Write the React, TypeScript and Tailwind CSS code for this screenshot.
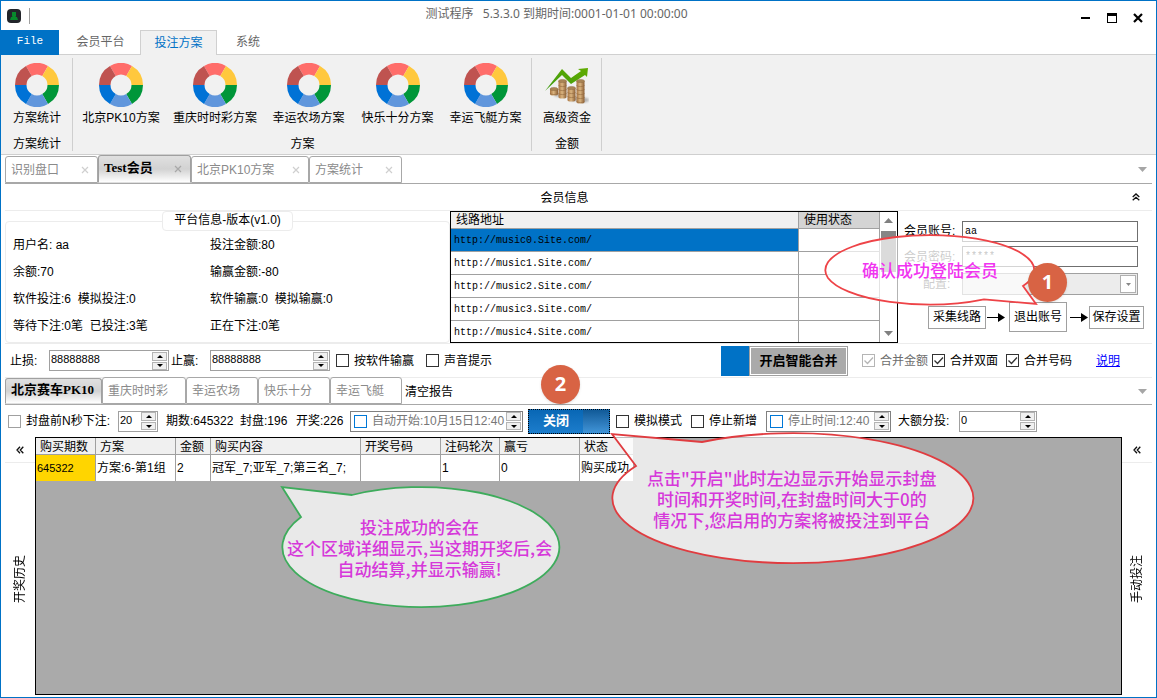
import React, { useId } from 'react';

const SANS = "font-['Liberation_Sans','Noto_Sans_CJK_SC',sans-serif]";
const CJK = "font-['Noto_Sans_CJK_SC',sans-serif]";
const SERIF_BOLD = "font-['Liberation_Serif','Noto_Sans_CJK_SC',serif] text-[13px] font-bold";

const ringColors = ['#ff6d6a', '#ffc83d', '#009639', '#6096dc', '#0072d6', '#bf5350'];

function Ring() {
  const point = (r: number, deg: number) => {
    const a = (deg * Math.PI) / 180;
    return `${(22 + r * Math.cos(a)).toFixed(2)} ${(22 + r * Math.sin(a)).toFixed(2)}`;
  };
  return (
    <svg width="44" height="44" viewBox="0 0 44 44" aria-hidden="true">
      {ringColors.map((c, i) => {
        const s = -120 + i * 60;
        return (
          <path
            key={c}
            fill={c}
            d={`M${point(22, s)} A22 22 0 0 1 ${point(22, s + 60)} L${point(10.5, s + 60)} A10.5 10.5 0 0 0 ${point(10.5, s)} Z`}
          />
        );
      })}
    </svg>
  );
}

function Stack({ x, y, h }: { x: number; y: number; h: number }) {
  const rings: number[] = [];
  for (let i = 4; i < h; i += 4) rings.push(i);
  return (
    <g>
      <path d={`M${x} ${y} V${y + h} a4 1.6 0 0 0 8 0 V${y} Z`} fill="url(#coin)" />
      {rings.map((r) => (
        <path key={r} d={`M${x} ${y + r} a4 1.6 0 0 0 8 0`} fill="none" stroke="#936a3f" strokeWidth="0.6" />
      ))}
      <ellipse cx={x + 4} cy={y} rx="4" ry="1.6" fill="#a98455" stroke="#8d6a43" strokeWidth="0.5" />
    </g>
  );
}

function Money() {
  return (
    <svg width="44" height="44" viewBox="0 0 44 44" aria-hidden="true">
      <defs>
        <linearGradient id="coin">
          <stop offset="0" stopColor="#a87440" />
          <stop offset="0.45" stopColor="#dab480" />
          <stop offset="1" stopColor="#8c5f35" />
        </linearGradient>
        <linearGradient id="rise" x1="0" y1="1" x2="1" y2="0">
          <stop offset="0" stopColor="#3c9a12" />
          <stop offset="1" stopColor="#62ac00" />
        </linearGradient>
        <filter id="soft"><feGaussianBlur stdDeviation="1" /></filter>
      </defs>
      <g fill="#b0b0b0" filter="url(#soft)">
        <ellipse cx="38" cy="37" rx="6" ry="2.500" />
        <ellipse cx="29" cy="36" rx="5" ry="2" />
        <ellipse cx="14" cy="32" rx="5" ry="1.500" />
      </g>
      <Stack x={5} y={26} h={5} />
      <Stack x={13.5} y={18} h={16} />
      <Stack x={22.5} y={25} h={12} />
      <Stack x={31.5} y={18} h={21} />
      <path d="M0 28 L17 6 L26 15 L36 8 L33 6 L43 5 L42 14 L40 12 L26 21 L17 12 Z" fill="url(#rise)" />
    </svg>
  );
}

function RibbonButton({ label, width, icon }: { label: string; width: string; icon?: React.ReactNode }) {
  return (
    <button type="button" className={`flex flex-col items-center gap-px pt-2 ${width}`}>
      {icon ?? <Ring />}
      <span className="whitespace-nowrap leading-5">{label}</span>
    </button>
  );
}

function RibbonGroup({ title, width, children }: { title: string; width: string; children: React.ReactNode }) {
  return (
    <div className={`relative flex flex-col justify-between after:absolute after:inset-y-[3px] after:right-0 after:w-px after:bg-[#cfcfcf] ${width}`}>
      <div className="flex justify-center">{children}</div>
      <div className="text-center leading-5">{title}</div>
    </div>
  );
}

function DocTab({ label, width, active, closable }: { label: string; width: string; active?: boolean; closable?: boolean }) {
  return (
    <button
      type="button"
      className={`flex shrink-0 items-center justify-between whitespace-nowrap rounded-t-[3px] border pl-[5px] pr-2 ${width} ${
        active
          ? `h-full border-[#a0a0a0] border-b-transparent bg-gradient-to-b from-[#e0e0e0] via-[#d2d2d2] to-white text-black ${SERIF_BOLD}`
          : 'h-[27px] border-[#a8a8a8] bg-white text-[#8a8a8a]'
      }`}
    >
      <span className={active ? '-mt-0.5' : ''}>{label}</span>
      {closable && (
        <svg width="8" height="8" viewBox="0 0 8 8" className={active ? 'text-[#a8a8a8]' : 'text-[#cfcfcf]'} aria-hidden="true">
          <path d="M1 1 L7 7 M7 1 L1 7" stroke="currentColor" strokeWidth="1.2" />
        </svg>
      )}
    </button>
  );
}

function DropArrow() {
  return (
    <button type="button" aria-label="标签列表" className="mr-[5px] self-center">
      <svg width="9" height="5" viewBox="0 0 9 5" aria-hidden="true">
        <path d="M0 0 H9 L4.500 5 Z" fill="#a6a6a6" />
      </svg>
    </button>
  );
}

function SpinButtons() {
  return (
    <span className="mr-px flex w-[15px] shrink-0 flex-col gap-px">
      <button type="button" aria-label="增加" className="flex h-[9px] items-center justify-center border border-[#b4b4b4] bg-[#f0f0f0]">
        <svg width="6" height="3" viewBox="0 0 6 3" aria-hidden="true"><path d="M3 0 L6 3 H0 Z" /></svg>
      </button>
      <button type="button" aria-label="减少" className="flex h-2 items-center justify-center border border-[#b4b4b4] bg-[#f0f0f0]">
        <svg width="6" height="3" viewBox="0 0 6 3" aria-hidden="true"><path d="M3 3 L6 0 H0 Z" /></svg>
      </button>
    </span>
  );
}

function Spin({ label, labelWidth, width, value }: { label: string; labelWidth: string; width: string; value: string }) {
  const id = useId();
  return (
    <div className="flex shrink-0 items-center">
      <label htmlFor={id} className={labelWidth}>{label}</label>
      <span className={`flex h-[21px] items-center border border-[#a0a0a0] bg-white ${width}`}>
        <input id={id} defaultValue={value} className="h-4 w-full min-w-0 self-start px-px text-[11px] leading-4 outline-none" />
        <SpinButtons />
      </span>
    </div>
  );
}

function Check({ label, name, checked, disabled, tone = 'border-[#333]', width = '' }: {
  label: string; name?: string; checked?: boolean; disabled?: boolean; tone?: string; width?: string;
}) {
  return (
    <label className={`flex shrink-0 items-center ${disabled ? 'text-[#6d6d6d]' : ''} ${width}`}>
      <span className="relative flex">
        <input type="checkbox" aria-label={name} defaultChecked={checked} disabled={disabled} className={`h-[13px] w-[13px] appearance-none border bg-white ${tone}`} />
        {checked && (
          <svg width="13" height="13" viewBox="0 0 13 13" className="pointer-events-none absolute inset-0" aria-hidden="true">
            <path d="M2.500 6.500 L5.500 9.500 L11 3.500" fill="none" stroke={disabled ? '#b5b5b5' : '#333'} strokeWidth="1.3" />
          </svg>
        )}
      </span>
      <span className="pl-[5px]">{label}</span>
    </label>
  );
}

function Chevrons({ up }: { up?: boolean }) {
  return (
    <svg width="8" height="8" viewBox="0 0 8 8" className={up ? 'rotate-90' : ''} aria-hidden="true">
      <path d="M4 0.700 L1 4 L4 7.300 M7.300 0.700 L4.300 4 L7.300 7.300" fill="none" stroke="#111" strokeWidth="1.3" />
    </svg>
  );
}

function SidePanel({ title }: { title: string }) {
  return (
    <div className="flex w-[30px] shrink-0 flex-col items-center bg-white">
      <button type="button" aria-label={`展开${title}`} className="flex h-[26px] w-full items-center justify-center border-b border-[#ececec]">
        <Chevrons />
      </button>
      <div className="flex flex-1 items-center justify-center">
        <span className="rotate-180 leading-5 [text-orientation:sideways] [writing-mode:vertical-rl]">{title}</span>
      </div>
    </div>
  );
}

function FlowArrow() {
  return (
    <svg width="20" height="10" viewBox="0 0 20 10" className="shrink-0" aria-hidden="true">
      <path d="M1 5.500 H14" stroke="#000" />
      <path d="M12 1 L19 5.500 L12 10 Z" />
    </svg>
  );
}

function Badge({ n, place }: { n: number; place: string }) {
  return (
    <div className={`absolute flex h-[39px] w-[39px] items-center justify-center rounded-full bg-[#d86344] font-['Open_Sans',sans-serif] text-[20px] font-bold text-white shadow-sm ${place}`}>
      {n}
    </div>
  );
}

const routes = [0, 1, 2, 3, 4].map((n) => `http://music${n}.Site.com/`);

const columns = [
  { title: '购买期数', value: '645322', width: 'w-[60px]' },
  { title: '方案', value: '方案:6-第1组', width: 'w-[80px]' },
  { title: '金额', value: '2', width: 'w-[35px]' },
  { title: '购买内容', value: '冠军_7;亚军_7;第三名_7;', width: 'w-[150px]' },
  { title: '开奖号码', value: '', width: 'w-[80px]' },
  { title: '注码轮次', value: '1', width: 'w-[59px]' },
  { title: '赢亏', value: '0', width: 'w-[80px]' },
  { title: '状态', value: '购买成功', width: 'w-[53px]' },
];

function TitleBar() {
  return (
    <div className="grid h-[29px] grid-cols-[1fr_auto_1fr] items-center">
      <div className="flex items-center gap-2 pl-1.5">
        <svg width="14" height="14" viewBox="0 0 14 14" aria-hidden="true">
          <rect width="14" height="14" rx="4" fill="#22252a" />
          <path d="M5 3 H9 V7 L8.500 8 H10 L11 11 H3 L4 8 H5.500 L5 7 Z" fill="#078a2c" />
        </svg>
        <span className="h-4 w-px bg-[#a0a0a0]" />
      </div>
      <div className="whitespace-pre pb-1 pr-11 font-['Noto_Sans','Noto_Sans_CJK_SC',sans-serif] text-xs leading-5 text-[#666]">
        {'测试程序   5.3.3.0 到期时间:0001-01-01 00:00:00'}
      </div>
      <div className="flex items-center justify-end gap-4 pr-[13px] pt-1">
        <button type="button" aria-label="最小化"><svg width="10" height="10" viewBox="0 0 10 10"><path d="M0 4 H9 V6 H0 Z" /></svg></button>
        <button type="button" aria-label="最大化"><svg width="10" height="10" viewBox="0 0 10 10"><path d="M0 0 H10 V10 H0 Z M1 3 V9 H9 V3 Z" fillRule="evenodd" /></svg></button>
        <button type="button" aria-label="关闭窗口"><svg width="10" height="10" viewBox="0 0 10 10"><path d="M1 1 L9 9 M9 1 L1 9" stroke="#000" strokeWidth="2.200" /></svg></button>
      </div>
    </div>
  );
}

function RibbonTabs() {
  return (
    <nav className="flex h-[25px] text-[#666]">
      <button type="button" className="w-[58px] bg-[#0072c6] pb-0.5 font-['Liberation_Mono',monospace] text-[11px] text-white">File</button>
      <button type="button" className="w-[81px] border-b border-[#d0d0d0] pl-0.5">会员平台</button>
      <button type="button" className="-mr-px w-[77px] border border-b-0 border-[#d0d0d0] bg-[#f1f1f1] text-[#0072c6]">投注方案</button>
      <button type="button" className="w-[64px] border-b border-[#d0d0d0]">系统</button>
      <span className="flex-1 border-b border-[#d0d0d0]" />
    </nav>
  );
}

function AccountInfo() {
  return (
    <fieldset className="w-[445px] shrink-0 rounded border border-[#ececec]">
      <legend className="mx-auto h-5 w-[131px] rounded-sm border border-[#ececec] bg-white text-center leading-4">平台信息-版本(v1.0)</legend>
      <div className="grid grid-cols-[197px_1fr] pl-[7px] pt-px leading-[27px]">
        <span>用户名: aa</span><span>投注金额:80</span>
        <span>余额:70</span><span>输赢金额:-80</span>
        <span>软件投注:6&nbsp; 模拟投注:0</span><span>软件输赢:0&nbsp; 模拟输赢:0</span>
        <span>等待下注:0笔&nbsp; 已投注:3笔</span><span>正在下注:0笔</span>
      </div>
    </fieldset>
  );
}

function RouteList() {
  return (
    <div className="flex h-[132px] w-[448px] shrink-0 overflow-hidden border border-black">
      <table className="h-fit flex-1 table-fixed border-separate border-spacing-0 text-left">
        <thead>
          <tr className="h-[17px] leading-4">
            <th className="border-b border-r border-[#a0a0a0] bg-[#f0f0f0] p-0 pl-[5px] font-normal">线路地址</th>
            <th className="w-20 border-b border-[#a0a0a0] bg-[#d4d4d4] p-0 pl-[5px] font-normal">使用状态</th>
          </tr>
        </thead>
        <tbody className="font-['Liberation_Mono',monospace] text-[10px]">
          {routes.map((r, i) => (
            <tr key={r} className="h-[23px]">
              <td className={`border-b border-r border-[#a0a0a0] p-0 pl-[3px] pt-0.5 ${i === 0 ? 'bg-[#0072c6]' : ''}`}>{r}</td>
              <td className="border-b border-[#a0a0a0] p-0" />
            </tr>
          ))}
        </tbody>
      </table>
      <div className="flex w-[18px] flex-col items-center justify-between border-l border-[#a0a0a0] py-1.5">
        <div className="flex flex-col items-center gap-2">
          <svg width="9" height="5" viewBox="0 0 9 5"><path d="M0 5 L4.500 0 L9 5 Z" fill="#808080" /></svg>
          <span className="h-[41px] w-[15px] bg-[#868686]" />
        </div>
        <svg width="9" height="5" viewBox="0 0 9 5"><path d="M0 0 L4.500 5 L9 0 Z" fill="#808080" /></svg>
      </div>
    </div>
  );
}

function LoginForm() {
  const field = 'h-[21px] w-full border border-[#6f6f6f] bg-white px-0.5 font-[\'Liberation_Mono\',monospace] text-[10px] outline-none';
  return (
    <form className="flex flex-1 flex-col pt-2.5 pr-[8px]">
      <div className="grid grid-cols-[58px_176px] justify-start pl-1.5">
        <label htmlFor="acct" className="h-[25px] leading-5">会员账号:</label>
        <input id="acct" defaultValue="aa" className={field} />
        <label htmlFor="pwd" className="h-[27px] leading-[22px] text-[#555]">会员密码:</label>
        <input id="pwd" defaultValue="*****" className={`${field} text-[#444]`} />
        <label htmlFor="cfg" className="pl-[19px] leading-[22px] text-[#555]">配置:</label>
        <div className="flex h-[22px] items-stretch border border-[#a0a0a0] bg-[#ececec] p-px">
          <select id="cfg" className="w-full appearance-none outline-none"><option value=""></option></select>
          <span className="flex w-4 shrink-0 items-center justify-center border border-[#b0b0b0] bg-white">
            <svg width="5" height="3" viewBox="0 0 5 3"><path d="M0 0 H5 L2.500 3 Z" fill="#888" /></svg>
          </span>
        </div>
      </div>
      <div className="mt-[7px] flex items-center pl-[30px]">
        <button type="button" className="h-[23px] w-[58px] shrink-0 border border-[#a0a0a0] bg-white leading-5">采集线路</button>
        <FlowArrow />
        <button type="button" className="ml-[3px] h-[30px] w-[58px] shrink-0 border border-[#a0a0a0] bg-white leading-5">退出账号</button>
        <span className="ml-0.5 flex"><FlowArrow /></span>
        <button type="button" className="h-[23px] w-[55px] shrink-0 border border-[#a0a0a0] bg-white leading-5">保存设置</button>
      </div>
    </form>
  );
}

function BetGrid() {
  return (
    <div className="flex-1 border border-black bg-[#aaa]">
      <table className="w-[597px] table-fixed border-separate border-spacing-0 text-left">
        <thead>
          <tr className="h-[17px] bg-[#f0f0f0] leading-[14px]">
            {columns.map((c) => (
              <th key={c.title} className={`whitespace-nowrap border-b border-r border-[#a0a0a0] p-0 pl-1 pt-0.5 font-normal last:border-r-0 ${c.width}`}>{c.title}</th>
            ))}
          </tr>
        </thead>
        <tbody>
          <tr className="h-[26px] bg-white">
            {columns.map((c, i) => (
              <td key={c.title} className={`whitespace-nowrap border-r border-[#a0a0a0] p-0 pl-px last:border-r-0 ${i === 0 ? 'bg-[#ffd500] text-[11px]' : ''}`}>{c.value}</td>
            ))}
          </tr>
        </tbody>
      </table>
    </div>
  );
}

function Notes() {
  const text = `absolute whitespace-nowrap text-center text-[17px] font-medium leading-[21px] ${CJK}`;
  return (
    <div className="pointer-events-none absolute inset-0">
      <svg className="absolute inset-0 h-full w-full" aria-hidden="true">
        <path d="M983 298.300 L1035 303 L1022 285 A104.500 35 0 1 0 827 277 A104.500 35 0 0 0 983 298.300 Z" fill="#fff" fillOpacity="0.7" stroke="#ee4347" strokeWidth="1.8" />
        <path d="M701 441 L611 433 L635 465 A180.500 65 0 1 0 701 441 Z" fill="#fff" fillOpacity="0.74" stroke="#e03c40" strokeWidth="1.8" />
        <path d="M351 494 L281 486 L300 516 A138.500 60 0 1 0 351 494 Z" fill="#fff" fillOpacity="0.74" stroke="#3eac5c" strokeWidth="1.8" />
      </svg>
      <p className={`${text} left-[861px] top-[258px] text-[#f034f0]`}>确认成功登陆会员</p>
      <p className={`${text} left-[646px] top-[466px] text-[#d638da]`}>
        点击"开启"此时左边显示开始显示封盘<br />时间和开奖时间,在封盘时间大于0的<br />情况下,您启用的方案将被投注到平台
      </p>
      <p className={`${text} left-[286px] top-[515px] text-[#d638da]`}>
        投注成功的会在<br />这个区域详细显示,当这期开奖后,会<br />自动结算,并显示输赢!
      </p>
      <Badge n={1} place="left-[1027px] top-[262px]" />
      <Badge n={2} place="left-[540px] top-[364px]" />
    </div>
  );
}

export default function App() {
  return (
    <div className={`relative flex min-h-screen flex-col overflow-hidden border border-[#0072c6] bg-white text-xs text-black ${SANS}`}>
      <TitleBar />
      <RibbonTabs />
      <div className="flex h-[100px] border-b border-[#cfcfcf] bg-[#f1f1f1]">
        <RibbonGroup title="方案统计" width="w-[72px]">
          <RibbonButton label="方案统计" width="w-[72px]" />
        </RibbonGroup>
        <RibbonGroup title="方案" width="w-[459px]">
          <RibbonButton label="北京PK10方案" width="w-[91px]" />
          <RibbonButton label="重庆时时彩方案" width="w-[97px]" />
          <RibbonButton label="幸运农场方案" width="w-[90px]" />
          <RibbonButton label="快乐十分方案" width="w-[88px]" />
          <RibbonButton label="幸运飞艇方案" width="w-[88px]" />
        </RibbonGroup>
        <RibbonGroup title="金额" width="w-[70px]">
          <RibbonButton label="高级资金" width="w-[68px]" icon={<Money />} />
        </RibbonGroup>
      </div>

      <main className="flex flex-1 flex-col px-1 pb-0.5">
        <div className="flex h-[29px] items-end border-b border-[#a8a8a8]">
          <DocTab label="识别盘口" width="w-[93px]" closable />
          <DocTab label="Test会员" width="w-[93px]" active closable />
          <DocTab label="北京PK10方案" width="w-[118px]" closable />
          <DocTab label="方案统计" width="w-[93px]" closable />
          <span className="flex-1" />
          <DropArrow />
        </div>
        <div className="grid h-[27px] grid-cols-[1fr_auto_1fr] items-center border-b border-[#ececec]">
          <span />
          <span className="pr-7 pt-px">会员信息</span>
          <button type="button" aria-label="收起会员信息" className="mr-3 justify-self-end"><Chevrons up /></button>
        </div>
        <section className="flex h-[133px] border-b border-[#ececec]">
          <AccountInfo />
          <RouteList />
          <LoginForm />
        </section>
        <div className="flex h-[34px] items-center border-b border-[#ececec] pl-[5px]">
          <Spin label="止损:" labelWidth="w-[39px]" width="w-[120px]" value="88888888" />
          <span className="w-0.5" />
          <Spin label="止赢:" labelWidth="w-[39px]" width="w-[120px]" value="88888888" />
          <span className="w-1.5" />
          <Check label="按软件输赢" width="w-[90px]" />
          <Check label="声音提示" width="w-[295px]" />
          <button type="button" className={`flex h-[30px] w-[127px] shrink-0 ${SERIF_BOLD}`}>
            <span className="h-full w-7 bg-[#0072c6]" />
            <span className="flex h-full flex-1 items-center justify-center border border-[#a0a0a0] bg-[#aaa] shadow-[inset_0_0_0_1px_#fff]">开启智能合并</span>
          </button>
          <span className="w-3.5" />
          <Check label="合并金额" width="w-[70px]" checked disabled tone="border-[#b5b5b5]" />
          <Check label="合并双面" width="w-[74px]" checked />
          <Check label="合并号码" width="w-[90px]" checked />
          <a href="#help" className="text-[#0000ff] underline">说明</a>
        </div>
        <div className="flex h-[27px] items-end border-b border-[#a8a8a8]">
          <DocTab label="北京赛车PK10" width="w-[97px]" active />
          <DocTab label="重庆时时彩" width="w-[84px]" />
          <DocTab label="幸运农场" width="w-[72px]" />
          <DocTab label="快乐十分" width="w-[72px]" />
          <DocTab label="幸运飞艇" width="w-[72px]" />
          <button type="button" className="self-center pl-[3px] pt-0.5">清空报告</button>
          <span className="flex-1" />
          <DropArrow />
        </div>
        <div className="flex h-8 items-center whitespace-nowrap pl-[3px]">
          <Check label="" name="封盘前下注" tone="border-[#a0a0a0]" />
          <Spin label="封盘前N秒下注:" labelWidth="w-[92px]" width="w-10" value="20" />
          <span className="w-[74px] shrink-0 pl-2">期数:645322</span>
          <span className="w-14 shrink-0 pl-2">封盘:196</span>
          <span className="w-[62px] shrink-0 pl-2">开奖:226</span>
          <div className="flex h-[21px] w-[173px] shrink-0 items-center justify-between border border-[#808080] pl-[3px] text-[#777]">
            <Check label="自动开始:10月15日12:40" tone="border-[#0078d7]" width="w-[151px]" />
            <SpinButtons />
          </div>
          <button type="button" className={`ml-[5px] flex h-[25px] w-[82px] shrink-0 items-stretch border border-dotted border-black bg-gradient-to-b from-[#0867b5] to-[#1c7dcc] text-white ${SERIF_BOLD}`}>
            <span className="flex w-[54px] items-center justify-center">关闭</span>
            <span className="flex-1 bg-gradient-to-b from-[#105a98] to-[#4195d8]" />
          </button>
          <span className="w-1.5 shrink-0" />
          <Check label="模拟模式" width="w-[75px]" />
          <Check label="停止新增" width="w-[75px]" />
          <div className="flex h-[21px] w-[125px] shrink-0 items-center justify-between border border-[#808080] pl-[3px] text-[#777]">
            <Check label="停止时间:12:40" tone="border-[#0078d7]" />
            <SpinButtons />
          </div>
          <span className="w-[7px] shrink-0" />
          <Spin label="大额分投:" labelWidth="w-[61px]" width="w-[78px]" value="0" />
        </div>
        <div className="flex flex-1">
          <SidePanel title="开奖历史" />
          <BetGrid />
          <SidePanel title="手动投注" />
        </div>
      </main>
      <Notes />
    </div>
  );
}
